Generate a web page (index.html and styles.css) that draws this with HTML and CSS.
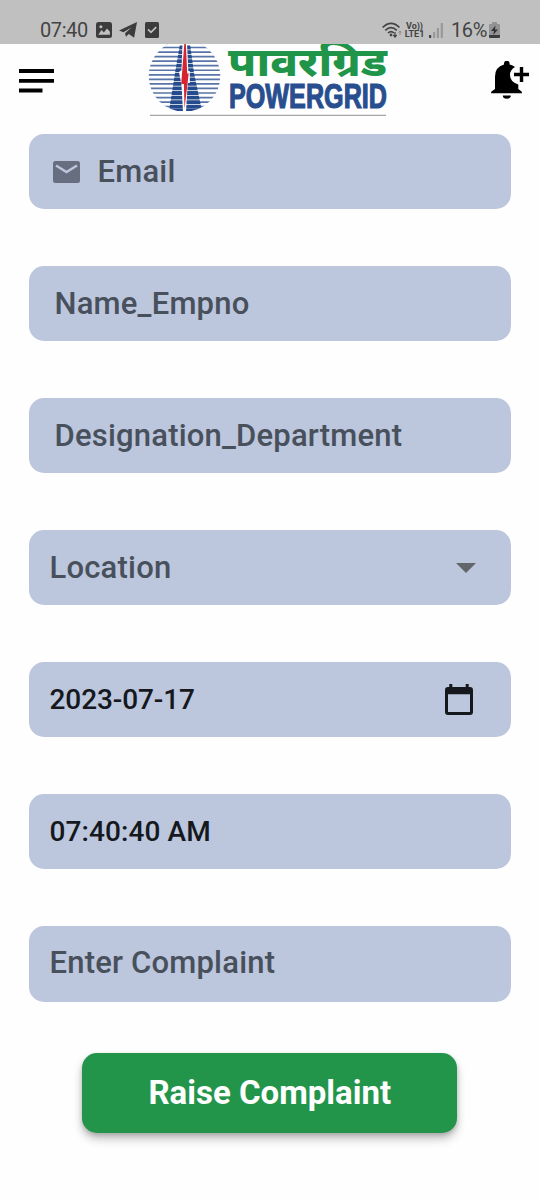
FILE: index.html
```html
<!DOCTYPE html>
<html lang="en">
<head>
<meta charset="utf-8">
<title>Raise Complaint</title>
<link rel="stylesheet" href="styles.css">
</head>
<body>
<header class="status">
  <div class="status-left">
    <span class="clock">07:40</span>
    <svg class="st-pic" viewBox="0 0 16 16"><rect width="16" height="16" rx="2.500" fill="#3c3c3c"/><path d="M2.300 12.700 5.500 8l2.400 2.400L11 6.500l2.900 3.200v3z" fill="#c0c0c0"/><circle cx="4.900" cy="4.700" r="1.500" fill="#c0c0c0"/></svg>
    <svg class="st-plane" viewBox="0 0 18 16"><path d="M0 8.600 18 0l-2.900 15.700-5.300-3.800L7 14.800 6 11.200 12.500 5.500 4.400 10.300z" fill="#3c3c3c"/></svg>
    <svg class="st-check" viewBox="0 0 14 16"><rect width="14" height="16" rx="1.500" fill="#3c3c3c"/><path d="m3 7.300 3 3 5.200-5.200" fill="none" stroke="#c0c0c0" stroke-width="1.700"/></svg>
  </div>
  <div class="status-right">
    <svg class="st-wifi" viewBox="0 0 21 16"><g fill="none" stroke="#444" stroke-width="1.700"><path d="M.6 5.500Q9 -2.800 17.500 5.500M3.300 8.300Q9 2.800 14.800 8.300M6 11q3-2.800 6 0"/></g><circle cx="9" cy="13" r="1.400" fill="#444"/><path d="M13 10v5m-1.700-2 1.700 2 1.700-2" fill="none" stroke="#444" stroke-width="1.200"/><path d="M18 13V9m-1.500 1.500L18 9l1.500 1.500" fill="none" stroke="#888"/></svg>
    <span class="volte"><span>Vo))</span><span>LTE1</span></span>
    <svg class="st-signal" viewBox="0 0 14 15"><path d="M0 12h2.200v3H0z" fill="#444"/><path d="M4 9h2.200v6H4zM7.800 5H10v10H7.800zM11.700 0h2.200v15h-2.200z" fill="#999"/></svg>
    <span class="percent">16%</span>
    <svg class="st-battery" viewBox="0 0 11 16"><path d="M3 0h5v2h2.300q.7 0 .7.700V13H0V2.700Q0 2 .7 2H3z" fill="#939393"/><path d="M0 13h11v2q0 1-1 1H1q-1 0-1-1z" fill="#3c3c3c"/><path d="M6.500 3.500 2 9h3l-.8 4L9 7.500H6z" fill="#333"/></svg>
  </div>
</header>

<nav class="bar">
  <svg class="menu" viewBox="0 0 35 24"><path d="M0 0h35v4H0zM0 10h35v3.800H0zM0 19.600h23.500v3.900H0z"/></svg>
  <svg class="logo" viewBox="148 44 240 74" role="img">
    <defs>
      <clipPath id="globe"><circle cx="184.500" cy="76" r="35.800"/></clipPath>
      <clipPath id="tower"><path d="M180 44h10l4 29 8 38h-33l6-38z"/></clipPath>
    </defs>
    <g clip-path="url(#globe)">
      <path d="M148 47.500h73M148 52.050h73M148 56.600h73M148 61.150h73M148 65.700h73M148 70.250h73M148 74.800h73M148 79.350h73M148 83.900h73M148 88.450h73M148 93h73M148 97.550h73M148 102.100h73M148 106.650h73" stroke="#5874a8" stroke-width="1.700"/>
      <path clip-path="url(#tower)" d="M148 47.500h73M148 52.050h73M148 56.600h73M148 61.150h73M148 65.700h73M148 70.250h73M148 74.800h73M148 79.350h73M148 83.900h73M148 88.450h73M148 93h73M148 97.550h73M148 102.100h73M148 106.650h73M148 110.700h73" stroke="#244b8b" stroke-width="3.800"/>
      <path d="M153 56.500Q159 47 169 43M200 43q10 4 15 13" fill="none" stroke="#426198" stroke-width="1.300"/>
      <path d="M182.500 43h4.500l1.300 28h1.500v12h-2L186 112h-3l-1.500-27-2.500-13 2.500-2z" fill="#fff"/>
    </g>
    <path d="M184.300 44h1.600l1.300 29.500h1.500L184.500 109l-.6-25h-2.700z" fill="#d62530"/>
    <text class="hindi" x="228" y="76" textLength="159" lengthAdjust="spacingAndGlyphs">पावरग्रिड</text>
    <text class="brand" x="229" y="107.800" textLength="158" lengthAdjust="spacingAndGlyphs">POWERGRID</text>
    <path d="M150 115.400h236" stroke="#a6a6a6" stroke-width="1.300"/>
  </svg>
  <svg class="bell" viewBox="0 0 38 39"><path d="M13 3.500V2.500a2.800 2.800 0 0 1 5.600 0v1q3.200.5 5.400 2.600-5 2.800-5 8 0 7 8.300 9.300V28l3 2.300q.7.500.7 2H0q0-1.500.8-2L4 28V15.500Q4 6 13 3.500z"/><path d="M11.800 34.500h8a4 3.200 0 0 1-8 0z"/><path d="M23 13.500h15M30.500 6v15" stroke="#000" stroke-width="3.400" fill="none"/></svg>
</nav>

<main class="form">
  <div class="field email">
    <svg class="mail" viewBox="0 0 27 22"><rect width="27" height="22" rx="2.500" fill="#666e7f"/><path d="m3 4.500 10.500 6.500L24 4.500" fill="none" stroke="#bcc6dc" stroke-width="2.500"/></svg>
    <span>Email</span>
  </div>
  <div class="field inset"><span>Name_Empno</span></div>
  <div class="field inset"><span>Designation_Department</span></div>
  <div class="field"><span>Location</span><svg class="caret" viewBox="0 0 20 10"><path d="M0 0h20L10 10z" fill="#62666b"/></svg></div>
  <div class="field value"><span class="date">2023-07-17</span><svg class="calendar" viewBox="0 0 28 31"><path d="M4.300 0h3v3h13.400V0h3v3H25q3 0 3 3v22q0 3-3 3H3q-3 0-3-3V6q0-3 3-3h1.300zM3 10.300V28h22V10.300z" fill="#15181d" fill-rule="evenodd"/></svg></div>
  <div class="field value"><span>07:40:40 AM</span></div>
  <div class="field complaint"><span>Enter Complaint</span></div>
  <button class="submit" type="button">Raise Complaint</button>
</main>
</body>
</html>
```
FILE: styles.css
```css
* { box-sizing: border-box; }
body {
  margin: 0;
  width: 540px;
  height: 1200px;
  background: #fefefe;
  font-family: Roboto, "Liberation Sans", sans-serif;
  overflow: hidden;
}
svg { display: block; flex: none; }
.status {
  height: 44px;
  padding: 16px 40px 0;
  background: #c0c0c0;
  color: #444;
  display: flex;
  justify-content: space-between;
}
.status-left, .status-right { display: flex; height: 28px; align-items: center; }
.clock { width: 56px; font-size: 20px; letter-spacing: -.4px; }
.st-pic { width: 16px; height: 16px; }
.st-plane { width: 18px; height: 16px; margin-left: 7px; }
.st-check { width: 14px; height: 16px; margin-left: 8px; }
.st-wifi { width: 21px; height: 16px; }
.volte {
  width: 21px;
  margin-left: 1px;
  display: flex;
  flex-direction: column;
  align-items: center;
  font-size: 9px;
  font-weight: 700;
  line-height: 8px;
}
.st-signal { width: 14px; height: 15px; margin-left: 4px; }
.percent { width: 38px; margin-left: 8px; font-size: 20px; letter-spacing: -.4px; }
.st-battery { width: 11px; height: 16px; }
.bar {
  height: 74px;
  padding: 0 11px 0 19px;
  display: flex;
  justify-content: space-between;
  align-items: flex-start;
}
.menu { width: 35px; height: 24px; margin-top: 25px; }
.logo { width: 240px; height: 74px; margin-left: -10px; }
.hindi { font: 800 40px "Noto Sans", "Noto Sans Devanagari", sans-serif; fill: #20954a; }
.brand { font: 700 35px "Liberation Sans", sans-serif; fill: #284e8f; stroke: #284e8f; stroke-width: 1.2px; }
.bell { width: 38px; height: 39px; margin-top: 17px; }
.form { padding: 16px 29px 0 28.500px; display: flex; flex-direction: column; gap: 57px; }
.field {
  height: 75px;
  padding: 0 35px 0 21px;
  border-radius: 15px;
  background: #bcc6dc;
  color: #48505c;
  display: flex;
  align-items: center;
  justify-content: space-between;
  font-size: 31px;
  font-weight: 500;
  letter-spacing: .2px;
}
.inset { padding-left: 26px; }
.email { padding-left: 24px; justify-content: flex-start; gap: 18px; }
.mail { width: 27px; height: 22px; }
.caret { width: 20px; height: 10px; }
.value { padding-right: 38px; color: #15181d; font-size: 28px; letter-spacing: .1px; }
.date { letter-spacing: -.1px; }
.calendar { width: 28px; height: 31px; }
.complaint { height: 76px; padding-bottom: 3px; }
.submit {
  width: 375px;
  height: 80px;
  margin: -6px auto 0;
  padding: 0 0 2px;
  border: 0;
  border-radius: 15px;
  background: #22954b;
  color: #fff;
  font: 700 33px Roboto, "Liberation Sans", sans-serif;
  box-shadow: 0 6px 10px rgba(0, 0, 0, .24), 0 2px 4px rgba(0, 0, 0, .16);
}
```
